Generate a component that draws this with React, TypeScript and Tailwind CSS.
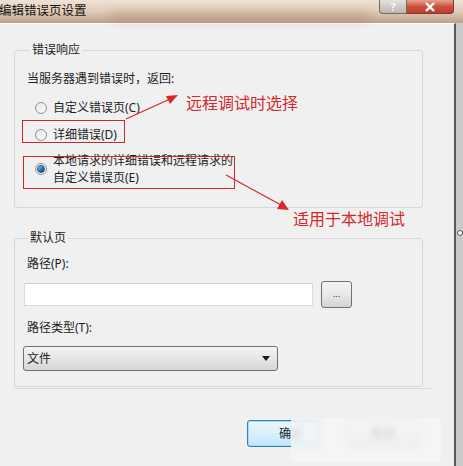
import React from 'react';

const font = "font-['Noto_Sans','Noto_Sans_CJK_SC',sans-serif]";

const Radio: React.FC<{ checked?: boolean }> = ({ checked }) => (
  <div className="w-[12px] h-[12px] rounded-full border border-[#8f9090] bg-gradient-to-br from-[#e9e9e9] to-[#fafafa] flex items-center justify-center shrink-0">
    {checked && (
      <div className="w-[8px] h-[8px] rounded-full bg-gradient-to-br from-[#9ed0ef] via-[#2a7fc1] to-[#0d3e6c] border border-[#1a4f7f]" />
    )}
  </div>
);

const RadioRow: React.FC<{ checked?: boolean; children: React.ReactNode; className?: string }> = ({ checked, children, className }) => (
  <div className={`flex items-center gap-[6px] pl-[10px] ${className ?? ''}`}>
    <Radio checked={checked} />
    <div className="leading-[17px]">{children}</div>
  </div>
);

const Annotations: React.FC = () => (
  <>
    {/* red boxes */}
    <div className="absolute left-[22px] top-[120px] w-[103px] h-[23px] border-[1.5px] border-[#c8292b]" />
    <div className="absolute left-[23px] top-[156px] w-[212px] h-[33px] border-[1.5px] border-[#c8292b]" />
    <svg className="absolute left-0 top-0 pointer-events-none" width="463" height="466">
      <line x1="126" y1="119" x2="170" y2="99" stroke="#d42a2d" strokeWidth="1.3" />
      <polygon points="178,95 166,96 170,104" fill="#d42a2d" />
      <line x1="226" y1="175" x2="281" y2="205" stroke="#d42a2d" strokeWidth="1.3" />
      <polygon points="289,210 277,209 282,200" fill="#d42a2d" />
    </svg>
    <div className="absolute left-[186px] top-[93px] text-[16px] leading-[20px] text-[#d42a2d]">远程调试时选择</div>
    <div className="absolute left-[293px] top-[209px] text-[16px] leading-[20px] text-[#d42a2d]">适用于本地调试</div>
  </>
);

export default function App() {
  return (
    <div className={`relative w-[463px] h-[466px] overflow-hidden flex flex-col bg-[#f0f0f0] text-[12px] text-[#1e1e1e] ${font}`}>
      {/* title bar */}
      <div className="relative h-[23px] flex items-start bg-gradient-to-b from-[#efe3d6] via-[#e0cbb8] to-[#bf9f88] shrink-0">
        <div className="absolute left-[110px] top-[12px] w-[260px] h-[9px] rounded-full bg-[#a88871]/40 blur-[4px]" />
        <div className="relative pt-[2px] text-[12.5px] leading-[17px] text-[#141414] -ml-[1px]">编辑错误页设置</div>
        <div className="relative ml-auto mr-[9px] flex">
          <div className="w-[28px] h-[14px] rounded-bl-[4px] border border-t-0 border-[#6e6a66] bg-gradient-to-b from-[#e8e2dd] to-[#bdb5ae] flex items-center justify-center text-[11px] leading-none text-[#f6f6f6] font-bold">?</div>
          <div className="w-[47px] h-[14px] rounded-br-[4px] border border-t-0 border-l-0 border-[#6e3f36] bg-gradient-to-b from-[#e6a190] via-[#c9503f] to-[#c63a2a] flex items-center justify-center">
            <svg width="12" height="10" viewBox="0 0 12 10">
              <path d="M2 1 L10 9 M10 1 L2 9" stroke="#ffffff" strokeWidth="2.4" />
            </svg>
          </div>
        </div>
      </div>

      {/* window body */}
      <div className="flex-1 flex">
        <div className="w-[456px] border-t border-white border-r-2 border-r-[#5e5953] pl-[14px] flex flex-col">
          {/* 错误响应 */}
          <fieldset className="mt-[18px] w-[409px] border border-[#d5d9dc] rounded-[3px] pl-[10px] pt-[13px] pb-[21px]">
            <legend className="ml-[5px] px-[2px] leading-[16px]">错误响应</legend>
            <div className="pl-[2px] leading-[16px]">当服务器遇到错误时，返回:</div>
            <RadioRow className="mt-[12px]">自定义错误页(C)</RadioRow>
            <RadioRow className="mt-[10px]">详细错误(D)</RadioRow>
            <RadioRow checked className="mt-[9px]">
              本地请求的详细错误和远程请求的
              <br />
              自定义错误页(E)
            </RadioRow>
          </fieldset>

          {/* 默认页 */}
          <fieldset className="mt-[22px] w-[409px] border border-[#d5d9dc] rounded-[3px] pl-[8px] pt-[10px] pb-[15px]">
            <legend className="ml-[5px] px-[2px] leading-[16px]">默认页</legend>
            <div className="pl-[4px] leading-[16px]">路径(P):</div>
            <div className="mt-[9px] flex items-center gap-[8px] pl-[1px]">
              <div className="w-[289px] h-[23px] bg-white border border-[#dcdcdc] border-t-[#cfcfcf]" />
              <button className="w-[31px] h-[27px] rounded-[3px] border border-[#707070] bg-gradient-to-b from-[#f3f3f3] via-[#e9e9e9] to-[#d2d2d2] text-[9px] leading-none text-[#333] pb-[3px]">
                ...
              </button>
            </div>
            <div className="mt-[12px] pl-[4px] leading-[16px]">路径类型(T):</div>
            <div className="mt-[10px] w-[255px] h-[25px] rounded-[3px] border border-[#707070] bg-gradient-to-b from-[#f4f4f4] via-[#e6e6e6] to-[#d6d6d6] flex items-center pl-[3px] pr-[7px]">
              <span className="leading-[16px]">文件</span>
              <svg className="ml-auto" width="8" height="5" viewBox="0 0 8 5">
                <path d="M0 0 H8 L4 5 Z" fill="#1a1a1a" />
              </svg>
            </div>
          </fieldset>
          <div className="mt-[1px] -ml-[1px] w-[420px] h-px bg-[#dcdcdc]" />

          {/* buttons */}
          <div className="mt-[31px] flex gap-[25px] pl-[233px]">
            <button className="w-[74px] h-[27px] rounded-[3px] border border-[#3c7fb1] bg-gradient-to-b from-[#eaf6fd] via-[#d9f0fc] to-[#bee6fd] shadow-[inset_0_0_0_1px_#9fdcf7] leading-[16px] text-left pl-[31px]">
              确定
            </button>
            <button className="w-[74px] h-[27px] rounded-[3px] border border-[#a0a0a0] bg-gradient-to-b from-[#f2f2f2] to-[#d6d6d6] leading-[16px]">
              取消
            </button>
          </div>
        </div>
        <div className="flex-1 bg-[#cacaca] relative">
          <div className="absolute left-[1px] top-[207px] w-[6px] h-[6px] rounded-full bg-white border border-[#555]" />
        </div>
      </div>

      <Annotations />

      {/* blurred watermark over the lower buttons */}
      <div className="absolute left-[291px] top-[418px] w-[150px] h-[44px] backdrop-blur-[3px] bg-[#f6f6f6]/80" />
    </div>
  );
}
